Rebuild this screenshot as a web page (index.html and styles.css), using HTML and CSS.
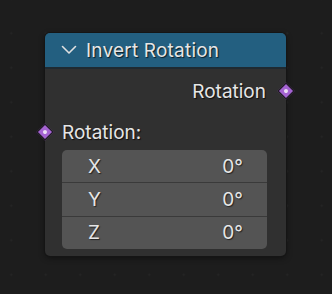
FILE: index.html
```html
<!DOCTYPE html>
<html>
<head>
<meta charset="utf-8">
<link rel="stylesheet" href="styles.css">
</head>
<body>
<div class="node">
  <div class="header">
    <svg class="chevron" width="16" height="10" viewBox="0 0 16 10"><path d="M1.5 1.5 L8 8 L14.5 1.5" fill="none" stroke="#e0e0e0" stroke-width="1.6" stroke-linecap="round" stroke-linejoin="round"/></svg>
    <span class="title">Invert Rotation</span>
  </div>
  <div class="body">
    <div class="row out">
      <span class="label">Rotation</span>
      <span class="socket sock-out"><span class="dot"></span></span>
    </div>
    <div class="row in">
      <span class="socket sock-in"><span class="dot"></span></span>
      <span class="label">Rotation:</span>
    </div>
    <div class="vector">
      <div class="field"><span>X</span><span>0°</span></div>
      <div class="field"><span>Y</span><span>0°</span></div>
      <div class="field"><span>Z</span><span>0°</span></div>
    </div>
  </div>
</div>
</body>
</html>
```

FILE: styles.css
```css
html, body {
  margin: 0;
  padding: 0;
}
body {
  width: 332px;
  height: 294px;
  overflow: hidden;
  background-color: #1d1d1d;
  background-image: radial-gradient(circle, #252525 0.9px, transparent 1.3px);
  background-size: 34.5px 34.5px;
  background-position: -6px 16px;
  font-family: Inter, "Noto Sans", sans-serif;
  font-size: 19px;
  color: #e6e6e6;
  padding-top: 33px;
  padding-left: 45px;
  box-sizing: border-box;
}
.node {
  width: 241px;
  height: 223px;
  background: #303030;
  border-radius: 5px;
  box-shadow: 0 0 0 1px #151515, 0 2px 6px rgba(0,0,0,0.45);
  display: flex;
  flex-direction: column;
  box-sizing: border-box;
}
.header {
  height: 34px;
  background: #235f80;
  border-bottom: 2px solid #1f2a31;
  border-radius: 5px 5px 0 0;
  display: flex;
  align-items: center;
  padding-left: 16px;
  gap: 9px;
  flex: none;
}
.chevron {
  display: block;
  margin-top: -1px;
}
.title {
  text-shadow: 1px 1px 1px rgba(0,0,0,0.7);
  letter-spacing: 0.2px;
}
.body {
  display: flex;
  flex-direction: column;
  padding: 11px 19px 7px 17px;
}
.row {
  height: 22px;
  display: flex;
  align-items: center;
  position: relative;
}
.row.out {
  justify-content: flex-end;
  padding-right: 1px;
}
.row.in {
  margin-top: 19px;
}
.label {
  text-shadow: 1px 1px 1px rgba(0,0,0,0.7);
}
.socket {
  position: absolute;
  width: 10px;
  height: 10px;
  background: #a463d2;
  border: 1px solid #111;
  transform: rotate(45deg);
  display: flex;
  align-items: center;
  justify-content: center;
  top: 5px;
}
.sock-out { right: -25px; }
.sock-in { left: -23px; }
.dot {
  width: 4px;
  height: 4px;
  border-radius: 50%;
  background: #ecdff5;
}
.vector {
  margin-top: 7px;
  height: 99px;
  background: #545454;
  border-radius: 5px;
  display: flex;
  flex-direction: column;
  overflow: hidden;
}
.field {
  flex: 1;
  display: flex;
  justify-content: space-between;
  align-items: center;
  padding: 0 24px 0 26px;
  text-shadow: 1px 1px 1px rgba(0,0,0,0.6);
}
.field + .field {
  border-top: 1px solid #3a3a3a;
}
```
